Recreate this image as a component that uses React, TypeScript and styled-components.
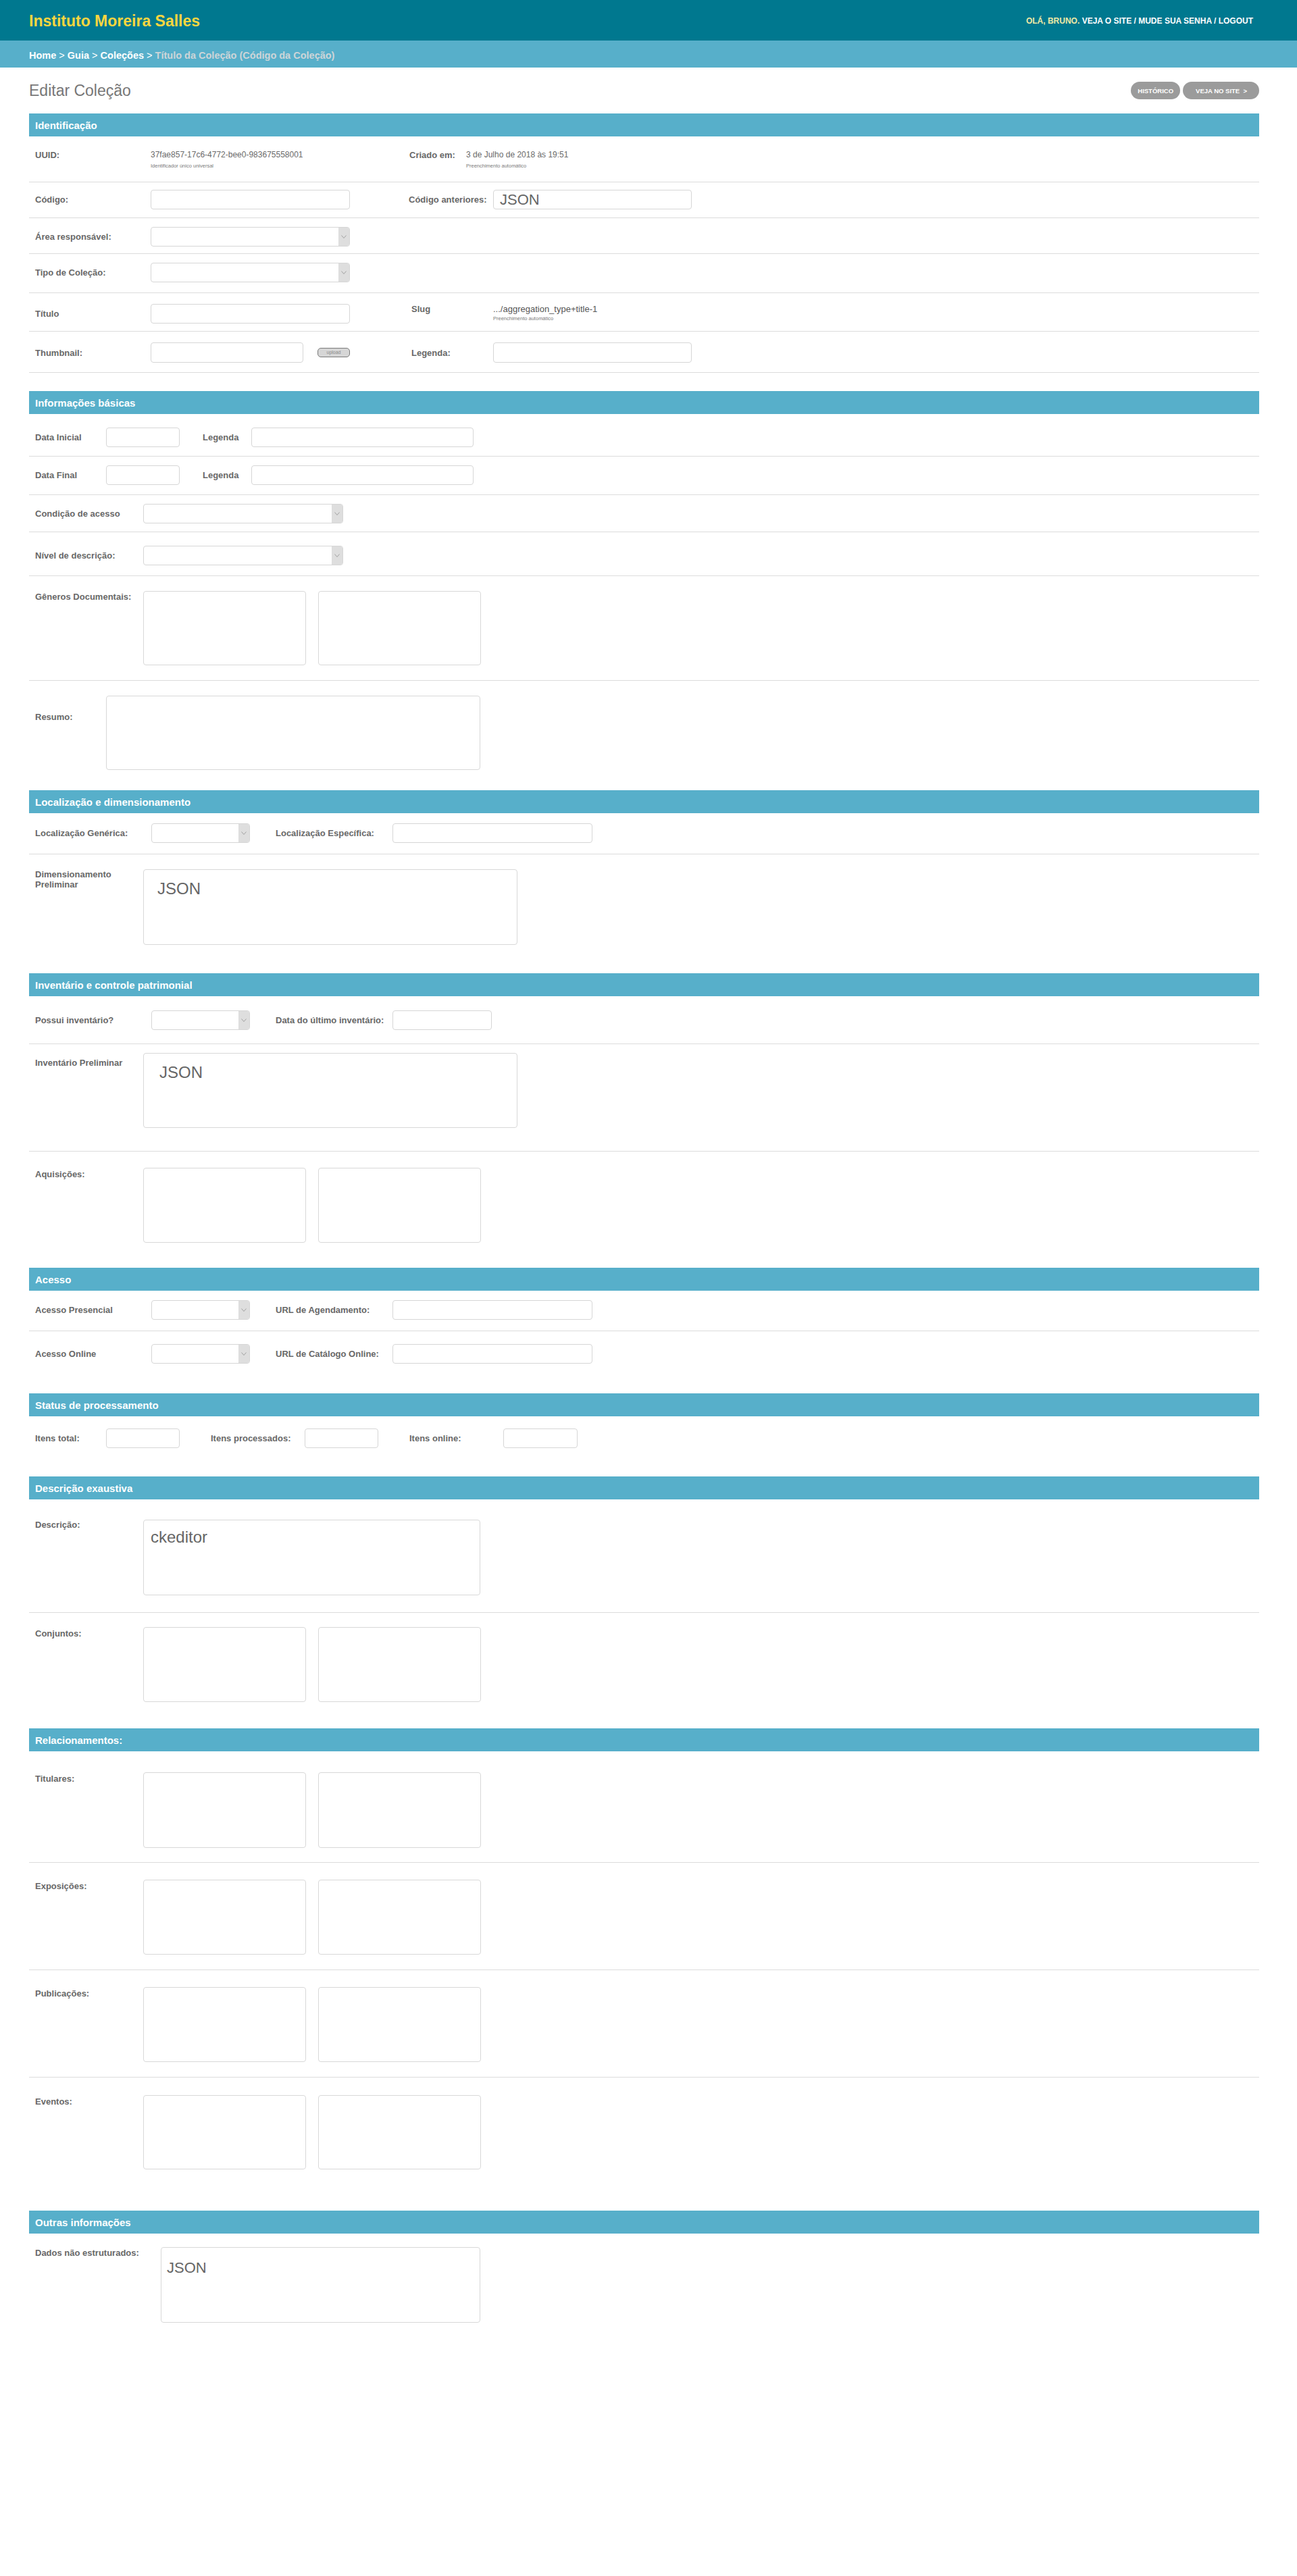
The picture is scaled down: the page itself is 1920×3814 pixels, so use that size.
import React from 'react';
import styled, { createGlobalStyle } from 'styled-components';

const GlobalStyle = createGlobalStyle`
  * {
    box-sizing: border-box;
  }
  body {
    margin: 0;
    background: #fff;
    color: #666;
    font-family: 'Liberation Sans', Arial, Helvetica, sans-serif;
  }
`;

const Chevron = () => (
  <svg width="8" height="5" viewBox="0 0 8 5">
    <polyline points="0.5,0.5 4,4.5 7.5,0.5" fill="none" stroke="#9a9a9a" strokeWidth="0.9" />
  </svg>
);

const App = () => {
  return (
    <>
      <GlobalStyle />
      <TopBar>
        <Brand>Instituto Moreira Salles</Brand>
        <UserNav>
          <Greeting>OLÁ, BRUNO.</Greeting> VEJA O SITE / MUDE SUA SENHA / LOGOUT
        </UserNav>
      </TopBar>
      <Crumbs>
        <CrumbLink>Home</CrumbLink>
        <CrumbSep>&nbsp;&gt;&nbsp;</CrumbSep>
        <CrumbLink>Guia</CrumbLink>
        <CrumbSep>&nbsp;&gt;&nbsp;</CrumbSep>
        <CrumbLink>Coleções</CrumbLink>
        <CrumbSep>&nbsp;&gt;&nbsp;</CrumbSep>
        <CrumbCurrent>Título da Coleção (Código da Coleção)</CrumbCurrent>
      </Crumbs>

      <Main>
        <TitleRow>
          <PageTitle>Editar Coleção</PageTitle>
          <Actions>
            <PillButton>HISTÓRICO</PillButton>
            <PillButton $wide>VEJA NO SITE&nbsp;&nbsp;&gt;</PillButton>
          </Actions>
        </TitleRow>

        {/* Identificação */}
        <Section $mb={27}>
          <SectionHeader>Identificação</SectionHeader>
          <Row $top $pt={20} $pb={18} $line>
            <Label $w={171}>UUID:</Label>
            <ValueBlock $w={295}>
              <Value>37fae857-17c6-4772-bee0-983675558001</Value>
              <Help>Identificador único universal</Help>
            </ValueBlock>
            <Label $ml={88} $w={84}>Criado em:</Label>
            <ValueBlock>
              <Value>3 de Julho de 2018 às 19:51</Value>
              <Help>Preenchimento automático</Help>
            </ValueBlock>
          </Row>
          <Row $pt={11} $pb={12} $line>
            <Label $w={171}>Código:</Label>
            <Input $w={295} />
            <Label $ml={87} $w={125}>Código anteriores:</Label>
            <Input $w={294}>
              <InlineJson>JSON</InlineJson>
            </Input>
          </Row>
          <Row $pt={13} $pb={10} $line>
            <Label $w={171}>Área responsável:</Label>
            <Select $w={295}>
              <SelectArrow>
                <Chevron />
              </SelectArrow>
            </Select>
          </Row>
          <Row $pt={13} $pb={15} $line>
            <Label $w={171}>Tipo de Coleção:</Label>
            <Select $w={295}>
              <SelectArrow>
                <Chevron />
              </SelectArrow>
            </Select>
          </Row>
          <Row $pt={16} $pb={11} $line>
            <Label $w={171}>Título</Label>
            <Input $w={295} />
            <Label $ml={91} $w={121} $self="flex-start">
              Slug
            </Label>
            <ValueBlock $self="flex-start">
              <SlugValue>.../aggregation_type+title-1</SlugValue>
              <Help $mt={2}>Preenchimento automático</Help>
            </ValueBlock>
          </Row>
          <Row $pt={16} $pb={14} $line>
            <Label $w={171}>Thumbnail:</Label>
            <Input $w={226} $h={30} />
            <UploadButton>upload</UploadButton>
            <Label $ml={91} $w={121}>Legenda:</Label>
            <Input $w={294} $h={30} />
          </Row>
        </Section>

        {/* Informações básicas */}
        <Section>
          <SectionHeader>Informações básicas</SectionHeader>
          <Row $pt={20} $pb={13} $line>
            <Label $w={105}>Data Inicial</Label>
            <Input $w={109} />
            <Label $ml={34} $w={72}>Legenda</Label>
            <Input $w={329} />
          </Row>
          <Row $pt={13} $pb={14} $line>
            <Label $w={105}>Data Final</Label>
            <Input $w={109} />
            <Label $ml={34} $w={72}>Legenda</Label>
            <Input $w={329} />
          </Row>
          <Row $pt={13} $pb={12} $line>
            <Label $w={160}>Condição de acesso</Label>
            <Select $w={296}>
              <SelectArrow>
                <Chevron />
              </SelectArrow>
            </Select>
          </Row>
          <Row $pt={20} $pb={15} $line>
            <Label $w={160}>Nível de descrição:</Label>
            <Select $w={296}>
              <SelectArrow>
                <Chevron />
              </SelectArrow>
            </Select>
          </Row>
          <Row $top $pt={22} $pb={22} $line>
            <Label $w={160} $mt={1}>
              Gêneros Documentais:
            </Label>
            <ListPair>
              <ListBox $w={241} $h={110} />
              <ListBox $w={241} $h={110} />
            </ListPair>
          </Row>
          <Row $top $pt={22} $pb={30}>
            <Label $w={105} $mt={24}>
              Resumo:
            </Label>
            <ListBox $w={554} $h={110} />
          </Row>
        </Section>

        {/* Localização e dimensionamento */}
        <Section>
          <SectionHeader>Localização e dimensionamento</SectionHeader>
          <Row $pt={15} $pb={16} $line>
            <Label $w={172}>Localização Genérica:</Label>
            <Select $w={146}>
              <SelectArrow>
                <Chevron />
              </SelectArrow>
            </Select>
            <Label $ml={38} $w={173}>Localização Específica:</Label>
            <Input $w={296} />
          </Row>
          <Row $top $pt={22} $pb={42}>
            <Label $w={160}>Dimensionamento Preliminar</Label>
            <Editor $w={554} $h={112} $pl={20} $pt={13}>
              JSON
            </Editor>
          </Row>
        </Section>

        {/* Inventário e controle patrimonial */}
        <Section>
          <SectionHeader>Inventário e controle patrimonial</SectionHeader>
          <Row $pt={21} $pb={20} $line>
            <Label $w={172}>Possui inventário?</Label>
            <Select $w={146}>
              <SelectArrow>
                <Chevron />
              </SelectArrow>
            </Select>
            <Label $ml={38} $w={173}>Data do último inventário:</Label>
            <Input $w={147} />
          </Row>
          <Row $top $pt={13} $pb={34} $line>
            <Label $w={160} $mt={7}>
              Inventário Preliminar
            </Label>
            <Editor $w={554} $h={111} $pl={23} $pt={13}>
              JSON
            </Editor>
          </Row>
          <Row $top $pt={24} $pb={37}>
            <Label $w={160} $mt={2}>
              Aquisições:
            </Label>
            <ListPair>
              <ListBox $w={241} $h={111} />
              <ListBox $w={241} $h={111} />
            </ListPair>
          </Row>
        </Section>

        {/* Acesso */}
        <Section>
          <SectionHeader>Acesso</SectionHeader>
          <Row $pt={14} $pb={16} $line>
            <Label $w={172}>Acesso Presencial</Label>
            <Select $w={146}>
              <SelectArrow>
                <Chevron />
              </SelectArrow>
            </Select>
            <Label $ml={38} $w={173}>URL de Agendamento:</Label>
            <Input $w={296} />
          </Row>
          <Row $pt={19} $pb={44}>
            <Label $w={172}>Acesso Online</Label>
            <Select $w={146}>
              <SelectArrow>
                <Chevron />
              </SelectArrow>
            </Select>
            <Label $ml={38} $w={173}>URL de Catálogo Online:</Label>
            <Input $w={296} />
          </Row>
        </Section>

        {/* Status de processamento */}
        <Section>
          <SectionHeader>Status de processamento</SectionHeader>
          <Row $pt={18} $pb={42}>
            <Label $w={105}>Itens total:</Label>
            <Input $w={109} />
            <Label $ml={46} $w={139}>Itens processados:</Label>
            <Input $w={109} />
            <Label $ml={46} $w={139}>Itens online:</Label>
            <Input $w={110} />
          </Row>
        </Section>

        {/* Descrição exaustiva */}
        <Section>
          <SectionHeader>Descrição exaustiva</SectionHeader>
          <Row $top $pt={30} $pb={25} $line>
            <Label $w={160}>Descrição:</Label>
            <Editor $w={499} $h={112} $pl={10} $pt={10}>
              ckeditor
            </Editor>
          </Row>
          <Row $top $pt={21} $pb={39}>
            <Label $w={160} $mt={2}>
              Conjuntos:
            </Label>
            <ListPair>
              <ListBox $w={241} $h={111} />
              <ListBox $w={241} $h={111} />
            </ListPair>
          </Row>
        </Section>

        {/* Relacionamentos */}
        <Section>
          <SectionHeader>Relacionamentos:</SectionHeader>
          <Row $top $pt={31} $pb={21} $line>
            <Label $w={160} $mt={2}>
              Titulares:
            </Label>
            <ListPair>
              <ListBox $w={241} $h={112} />
              <ListBox $w={241} $h={112} />
            </ListPair>
          </Row>
          <Row $top $pt={25} $pb={22} $line>
            <Label $w={160} $mt={2}>
              Exposições:
            </Label>
            <ListPair>
              <ListBox $w={241} $h={111} />
              <ListBox $w={241} $h={111} />
            </ListPair>
          </Row>
          <Row $top $pt={25} $pb={22} $line>
            <Label $w={160} $mt={2}>
              Publicações:
            </Label>
            <ListPair>
              <ListBox $w={241} $h={111} />
              <ListBox $w={241} $h={111} />
            </ListPair>
          </Row>
          <Row $top $pt={26} $pb={61}>
            <Label $w={160} $mt={2}>
              Eventos:
            </Label>
            <ListPair>
              <ListBox $w={241} $h={110} />
              <ListBox $w={241} $h={110} />
            </ListPair>
          </Row>
        </Section>

        {/* Outras informações */}
        <Section>
          <SectionHeader>Outras informações</SectionHeader>
          <Row $top $pt={20} $pb={120}>
            <Label $w={186} $mt={1}>
              Dados não estruturados:
            </Label>
            <Editor $w={473} $h={112} $pl={8} $pt={15} $fs={22}>
              JSON
            </Editor>
          </Row>
        </Section>
      </Main>
    </>
  );
};

const TopBar = styled.header`
  height: 60px;
  background-color: #00788f;
  display: flex;
  align-items: center;
  justify-content: space-between;
  padding: 3px 65px 0 43px;
`;

const Brand = styled.div`
  font-size: 23px;
  font-weight: 700;
  color: #f9d63f;
`;

const UserNav = styled.div`
  font-size: 12px;
  font-weight: 700;
  color: #fff;
  padding-bottom: 2px;
`;

const Greeting = styled.span`
  color: #f1eaa5;
`;

const Crumbs = styled.nav`
  height: 40px;
  background-color: #57afca;
  display: flex;
  align-items: center;
  padding: 3px 0 0 43px;
  font-size: 14.5px;
  color: #fff;
`;

const CrumbLink = styled.span`
  font-weight: 700;
`;

const CrumbSep = styled.span`
  font-weight: 400;
`;

const CrumbCurrent = styled.span`
  font-weight: 700;
  color: #cdd5d8;
`;

const Main = styled.main`
  padding: 0 56px 0 43px;
`;

const TitleRow = styled.div`
  display: flex;
  justify-content: space-between;
  align-items: center;
  padding: 21px 0;
`;

const PageTitle = styled.h1`
  margin: 0;
  font-size: 23px;
  font-weight: 400;
  line-height: 26px;
  color: #777;
`;

const Actions = styled.div`
  display: flex;
  gap: 4px;
`;

const PillButton = styled.button<{ $wide?: boolean }>`
  height: 26px;
  border: none;
  border-radius: 13px;
  background-color: #9b9b9b;
  color: #fff;
  font-family: inherit;
  font-size: 9.5px;
  font-weight: 700;
  padding: ${(p) => (p.$wide ? '0 18px 0 19px' : '0 10px')};
  cursor: pointer;
`;

const Section = styled.section<{ $mb?: number }>`
  margin-bottom: ${(p) => p.$mb || 0}px;
`;

const SectionHeader = styled.h2`
  margin: 0;
  height: 34px;
  line-height: 35px;
  padding-left: 9px;
  background-color: #57afca;
  color: #fff;
  font-size: 15px;
  font-weight: 700;
`;

const Row = styled.div<{ $pt: number; $pb: number; $line?: boolean; $top?: boolean }>`
  display: flex;
  align-items: ${(p) => (p.$top ? 'flex-start' : 'center')};
  padding: ${(p) => `${p.$pt}px 0 ${p.$pb}px 9px`};
  border-bottom: ${(p) => (p.$line ? '1px solid #dcdcdc' : 'none')};
`;

const Label = styled.div<{ $w: number; $ml?: number; $mt?: number; $self?: string }>`
  flex: none;
  width: ${(p) => p.$w}px;
  margin-left: ${(p) => p.$ml || 0}px;
  margin-top: ${(p) => p.$mt || 0}px;
  align-self: ${(p) => p.$self || 'auto'};
  font-size: 13px;
  font-weight: 700;
  line-height: 15px;
  color: #686868;
`;

const ValueBlock = styled.div<{ $w?: number; $self?: string }>`
  flex: none;
  width: ${(p) => (p.$w ? `${p.$w}px` : 'auto')};
  align-self: ${(p) => p.$self || 'auto'};
`;

const Value = styled.div`
  font-size: 12px;
  line-height: 15px;
  color: #6a6a6a;
`;

const SlugValue = styled.div`
  font-size: 13px;
  line-height: 15px;
  color: #555;
`;

const Help = styled.div<{ $mt?: number }>`
  margin-top: ${(p) => (p.$mt === undefined ? 4 : p.$mt)}px;
  font-size: 7.5px;
  line-height: 10px;
  color: #7a7a7a;
`;

const Input = styled.div<{ $w: number; $h?: number }>`
  flex: none;
  width: ${(p) => p.$w}px;
  height: ${(p) => p.$h || 29}px;
  border: 1px solid #d6d6d6;
  border-radius: 4px;
  background: #fff;
  display: flex;
  align-items: center;
`;

const InlineJson = styled.span`
  padding-left: 9px;
  font-size: 22px;
  line-height: 27px;
  color: #666;
`;

const Select = styled.div<{ $w: number }>`
  flex: none;
  width: ${(p) => p.$w}px;
  height: 29px;
  border: 1px solid #d6d6d6;
  border-radius: 4px;
  background: #fff;
  display: flex;
  justify-content: flex-end;
  overflow: hidden;
`;

const SelectArrow = styled.div`
  width: 16px;
  height: 100%;
  background-color: #dedede;
  display: flex;
  align-items: center;
  justify-content: center;
`;

const UploadButton = styled.div`
  flex: none;
  width: 48px;
  height: 14px;
  margin-left: 21px;
  border: 1px solid #7a7a7a;
  border-radius: 5px;
  background-color: #d6d6d6;
  color: #8a8a8a;
  font-size: 7px;
  line-height: 12px;
  text-align: center;
`;

const ListPair = styled.div`
  display: flex;
  gap: 18px;
`;

const ListBox = styled.div<{ $w: number; $h: number }>`
  flex: none;
  width: ${(p) => p.$w}px;
  height: ${(p) => p.$h}px;
  border: 1px solid #d8d8d8;
  border-radius: 4px;
  background: #fff;
`;

const Editor = styled.div<{ $w: number; $h: number; $pl: number; $pt: number; $fs?: number }>`
  flex: none;
  width: ${(p) => p.$w}px;
  height: ${(p) => p.$h}px;
  padding: ${(p) => `${p.$pt}px 0 0 ${p.$pl}px`};
  border: 1px solid #d8d8d8;
  border-radius: 4px;
  background: #fff;
  font-size: ${(p) => p.$fs || 24}px;
  line-height: 30px;
  color: #666;
`;

export default App;
